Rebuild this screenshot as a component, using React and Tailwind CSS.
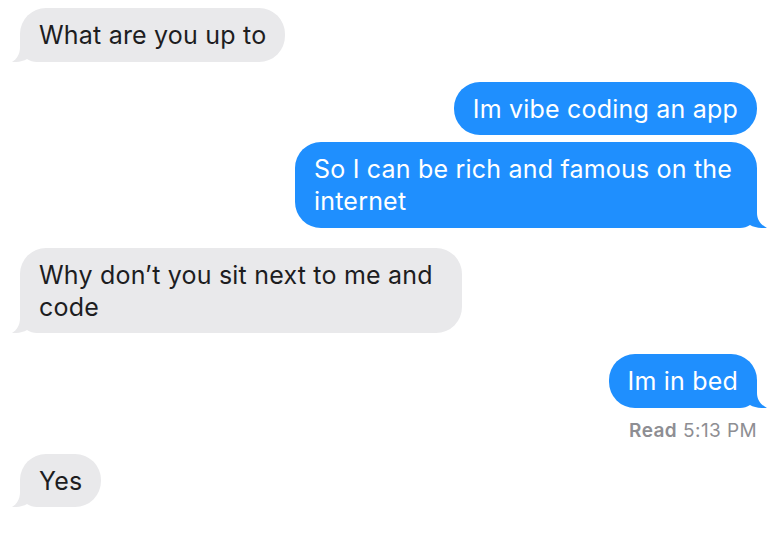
import React from "react";

function TailLeft() {
  return (
    <svg
      className="absolute left-[-8px] bottom-0"
      width="40"
      height="26"
      viewBox="0 0 40 26"
    >
      <path
        d="M8 0 L40 0 L40 26 L25 26 C21 26 18 25 15 23 C11 25.5 5 26.3 0 26 C5 23 8 18 8 11 Z"
        fill="#e9e9eb"
      />
    </svg>
  );
}

function TailRight({ color }) {
  return (
    <svg
      className="absolute right-[-10px] bottom-0"
      width="42"
      height="26"
      viewBox="0 0 42 26"
    >
      <path
        d="M32 0 L0 0 L0 26 L15 26 C19 26 22 25 25 23 C29 25.5 35 26.3 42 26 C36 23 32 18 32 11 Z"
        fill={color}
      />
    </svg>
  );
}

function Incoming({ children, w }) {
  return (
    <div className="flex justify-start pl-[20px]">
      <div
        className={`relative rounded-[26px] bg-[#e9e9eb] text-[#1d1d1f] px-[19px] pt-[11px] pb-[10.5px] ${w || "w-fit"}`}
      >
        <TailLeft />
        <div className="relative">{children}</div>
      </div>
    </div>
  );
}

function Outgoing({ children, w, tail }) {
  return (
    <div className="flex justify-end pr-[19px]">
      <div
        className={`relative rounded-[26px] bg-[#1f8ffe] text-white px-[19px] pt-[11px] pb-[10.5px] ${w || "w-fit"}`}
      >
        {tail && <TailRight color="#1f8ffe" />}
        <div className="relative">{children}</div>
      </div>
    </div>
  );
}

export default function App() {
  return (
    <div
      className="w-[776px] h-[540px] bg-white overflow-hidden pt-[8px] text-[25px] leading-[32px] tracking-[0.2px]"
      style={{ fontFamily: "Inter, 'Noto Sans', sans-serif" }}
    >
      <Incoming>What are you up to</Incoming>
      <div className="h-[20px]" />
      <Outgoing>Im vibe coding an app</Outgoing>
      <div className="h-[7px]" />
      <Outgoing w="w-[462px]" tail>
        So I can be rich and famous on the internet
      </Outgoing>
      <div className="h-[20px]" />
      <Incoming w="w-[442px]">Why don’t you sit next to me and code</Incoming>
      <div className="h-[21px]" />
      <Outgoing tail>Im in bed</Outgoing>
      <div className="flex justify-end pr-[19px] mt-[12px] text-[19px] leading-[22px] tracking-[0.4px] text-[#8e8e93]">
        <span className="font-semibold">Read</span>
        <span className="ml-[6px]">5:13 PM</span>
      </div>
      <div className="h-[12px]" />
      <Incoming>Yes</Incoming>
    </div>
  );
}
